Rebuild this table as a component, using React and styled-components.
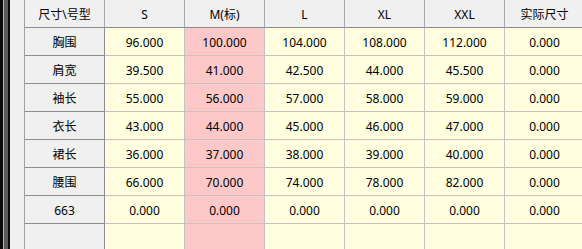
import React from "react";
import styled, { createGlobalStyle } from "styled-components";

const GlobalStyle = createGlobalStyle`
  * {
    box-sizing: border-box;
    margin: 0;
    padding: 0;
  }
  body {
    background-color: #f0f0f0;
    font-family: "Noto Sans", "Noto Sans CJK SC", sans-serif;
    font-size: 12px;
    color: #000;
    width: 582px;
    height: 249px;
    overflow: hidden;
  }
`;

const Frame = styled.div`
  display: flex;
  height: 249px;
  width: 582px;
  overflow: hidden;
`;

const Edge = styled.div`
  display: flex;
  flex: none;
  height: 100%;
`;

const Strip = styled.div`
  width: ${(p) => p.w}px;
  background-color: ${(p) => p.c};
`;

const Grid = styled.div`
  display: grid;
  grid-template-columns: repeat(7, 80px);
  grid-auto-rows: 28px;
  flex: none;
`;

const Cell = styled.div`
  display: flex;
  align-items: center;
  justify-content: center;
  white-space: nowrap;
  border-right: 1px solid ${(p) => (p.kind === "data" ? "#c3c3c3" : p.kind === "head" ? "#a8a8a8" : "#8c8c8c")};
  border-bottom: 1px solid ${(p) => (p.kind === "data" ? "#c3c3c3" : "#8c8c8c")};
  background-color: ${(p) =>
    p.kind === "data" ? (p.std ? "#ffc8c8" : "#ffffe0") : "#f0f0f0"};
  padding-top: 1px;
`;

const sizes = ["S", "M(标)", "L", "XL", "XXL", "实际尺寸"];

const rows = [
  ["胸围", "96.000", "100.000", "104.000", "108.000", "112.000", "0.000"],
  ["肩宽", "39.500", "41.000", "42.500", "44.000", "45.500", "0.000"],
  ["袖长", "55.000", "56.000", "57.000", "58.000", "59.000", "0.000"],
  ["衣长", "43.000", "44.000", "45.000", "46.000", "47.000", "0.000"],
  ["裙长", "36.000", "37.000", "38.000", "39.000", "40.000", "0.000"],
  ["腰围", "66.000", "70.000", "74.000", "78.000", "82.000", "0.000"],
  ["663", "0.000", "0.000", "0.000", "0.000", "0.000", "0.000"],
  ["", "", "", "", "", "", ""],
];

export default function App() {
  return (
    <Frame>
      <GlobalStyle />
      <Edge>
        <Strip w={3} c="#0c0c0c" />
        <Strip w={1} c="#b8b8b8" />
        <Strip w={4} c="#5a5d60" />
        <Strip w={2} c="#0c0c0c" />
        <Strip w={14} c="#f0f0f0" />
        <Strip w={1} c="#a0a0a0" />
      </Edge>
      <Grid>
        <Cell kind="head">尺寸\号型</Cell>
        {sizes.map((s) => (
          <Cell kind="head" key={s}>
            {s}
          </Cell>
        ))}
        {rows.map((r, i) =>
          r.map((v, j) => (
            <Cell
              key={i + "-" + j}
              kind={j === 0 ? "side" : "data"}
              std={j === 2}
            >
              {v}
            </Cell>
          ))
        )}
      </Grid>
    </Frame>
  );
}
